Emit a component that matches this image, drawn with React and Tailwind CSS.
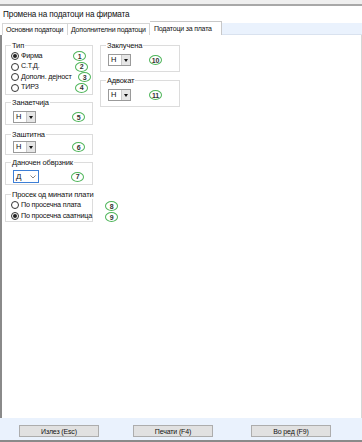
import React from 'react';

const font = { fontFamily: '"Liberation Sans", Arial, sans-serif', letterSpacing: '-0.15px' };

function Mark({ n, className = '' }) {
    return (
        <span
            className={
                'inline-flex h-[10px] w-[13px] shrink-0 items-center justify-center rounded-[50%] border border-[#4fb55a] text-[7px] font-bold leading-none text-[#333] ' +
                className
            }
        >
            {n}
        </span>
    );
}

function Radio({ checked, label }) {
    return (
        <div className="flex items-center">
            <span className="flex h-[8px] w-[8px] shrink-0 items-center justify-center rounded-full border border-[#333] bg-white">
                {checked && <span className="h-[4px] w-[4px] rounded-full bg-[#222]" />}
            </span>
            <span className="ml-[2px] whitespace-nowrap text-[7.2px] tracking-[-0.2px]">{label}</span>
        </div>
    );
}

function Combo({ value }) {
    return (
        <div className="flex h-[12px] w-[23px] items-stretch border border-[#9a9a9a] bg-white">
            <span className="flex-1 pl-[2px] text-[7.5px] leading-[10px]">{value}</span>
            <span className="flex w-[9px] items-center justify-center border-l border-[#c8c8c8] bg-[#e6e6e6]">
                <span className="h-0 w-0 border-x-[2.5px] border-t-[3px] border-x-transparent border-t-[#111]" />
            </span>
        </div>
    );
}

function Group({ title, className = '', children }) {
    return (
        <fieldset className={'min-w-0 border border-[#dcdcdc] px-[5px] ' + className}>
            <legend className="whitespace-nowrap px-[1px] text-[7.5px] leading-[9px] text-[#111]">{title}</legend>
            {children}
        </fieldset>
    );
}

export default function App() {
    const tip = [
        ['Фирма', true, 1, 'mr-[1px]'],
        ['С.Т.Д.', false, 2, 'mr-[-1px]'],
        ['Дополн. дејност', false, 3, 'mr-[-4px]'],
        ['ТИРЗ', false, 4, 'mr-[-1px]'],
    ];

    return (
        <div className="flex h-[442px] w-[362px] flex-col bg-white text-[7.5px] text-[#111]" style={font}>
            <div className="h-[4px] bg-[#efefef]" />
            <div className="h-[2px] bg-[#a8a8a8]" />

            <div className="h-[16px] whitespace-nowrap pl-[3px] pt-[4px] text-[8.2px] leading-[10px]">
                Промена на податоци на фирмата
            </div>

            <div className="flex h-[13px] items-end whitespace-nowrap text-[7px] tracking-[-0.2px]">
                <div className="ml-[2px] flex h-[12px] w-[66px] items-center border border-b-0 border-[#d6d6d6] pl-[3px] leading-none">
                    Основни податоци
                </div>
                <div className="flex h-[12px] w-[82px] items-center border border-b-0 border-l-0 border-[#d6d6d6] pl-[3px] leading-none">
                    Дополнителни податоци
                </div>
                <div className="flex h-[14px] w-[72px] items-center border border-b-0 border-l-0 border-[#c8c8c8] bg-white pl-[4px] leading-none">
                    Податоци за плата
                </div>
                <div className="h-[12px] flex-1 border-b border-[#d9e2ef] bg-[#eaf2fd]" />
            </div>

            <div className="flex flex-1 border-l-2 border-r border-l-[#8a8a8a] border-r-[#d6d6d6] pl-[3px]">
                <div className="flex w-[88px] flex-col pt-[6px]">
                    <Group title="Тип" className="h-[54px]">
                        <div className="flex flex-col pt-[1px]">
                            {tip.map(([label, checked, n, adj]) => (
                                <div key={label} className="flex h-[10.5px] items-center justify-between">
                                    <Radio checked={checked} label={label} />
                                    <Mark n={n} className={adj} />
                                </div>
                            ))}
                        </div>
                    </Group>

                    <Group title="Занаетчија" className="mt-[3px] h-[27px]">
                        <div className="flex items-center justify-between pl-[2px] pr-[2px] pt-[4px]">
                            <Combo value="Н" />
                            <Mark n={5} />
                        </div>
                    </Group>

                    <Group title="Заштитна" className="mt-[5px] h-[25px]">
                        <div className="flex items-center justify-between pl-[2px] pr-[2px] pt-[2px]">
                            <Combo value="Н" />
                            <Mark n={6} />
                        </div>
                    </Group>

                    <Group title="Даночен обврзник" className="mt-[3px] h-[27px]">
                        <div className="flex items-center justify-between pl-[2px] pr-[3px] pt-[3px]">
                            <div className="flex h-[13px] w-[26px] items-center justify-between border border-[#3d7fd6] bg-white px-[2px]">
                                <span className="text-[8px] leading-none">Д</span>
                                <svg width="6" height="4" viewBox="0 0 6 4">
                                    <path d="M0.5 0.5 L3 3 L5.5 0.5" fill="none" stroke="#777" strokeWidth="0.9" />
                                </svg>
                            </div>
                            <Mark n={7} />
                        </div>
                    </Group>

                    <Group title="Просек од минати плати" className="relative mt-[5px] h-[32px] overflow-visible">
                        <div className="flex flex-col pt-[1px]">
                            <div className="flex h-[11px] items-center">
                                <Radio checked={false} label="По просечна плата" />
                            </div>
                            <div className="flex h-[11px] items-center">
                                <Radio checked label="По просечна саатница" />
                            </div>
                        </div>
                        <Mark n={8} className="absolute left-[99px] top-[2px]" />
                        <Mark n={9} className="absolute left-[99px] top-[13px]" />
                    </Group>
                </div>

                <div className="ml-[7px] flex w-[80px] flex-col pt-[6px]">
                    <Group title="Заклучена" className="h-[31px]">
                        <div className="flex items-center pl-[2px] pt-[4px]">
                            <Combo value="Н" />
                            <Mark n={10} className="ml-[18px]" />
                        </div>
                    </Group>
                    <Group title="Адвокат" className="mt-[4px] h-[31px]">
                        <div className="flex items-center pl-[2px] pt-[4px]">
                            <Combo value="Н" />
                            <Mark n={11} className="ml-[18px]" />
                        </div>
                    </Group>
                </div>
            </div>

            <div className="flex h-[22px] items-start bg-[#eaf2fd] pt-[7px]">
                {['Излез (Esc)', 'Печати (F4)', 'Во ред (F9)'].map((t, i) => (
                    <div
                        key={t}
                        className={
                            'flex h-[12px] w-[80px] items-center justify-center border border-[#adadad] bg-[#e1e1e1] text-[7px] leading-none ' +
                            (i === 0 ? 'ml-[19px]' : i === 1 ? 'ml-[34px]' : 'ml-[38px]')
                        }
                    >
                        {t}
                    </div>
                ))}
            </div>
            <div className="h-[2px] bg-[#8a8a8a]" />
        </div>
    );
}
